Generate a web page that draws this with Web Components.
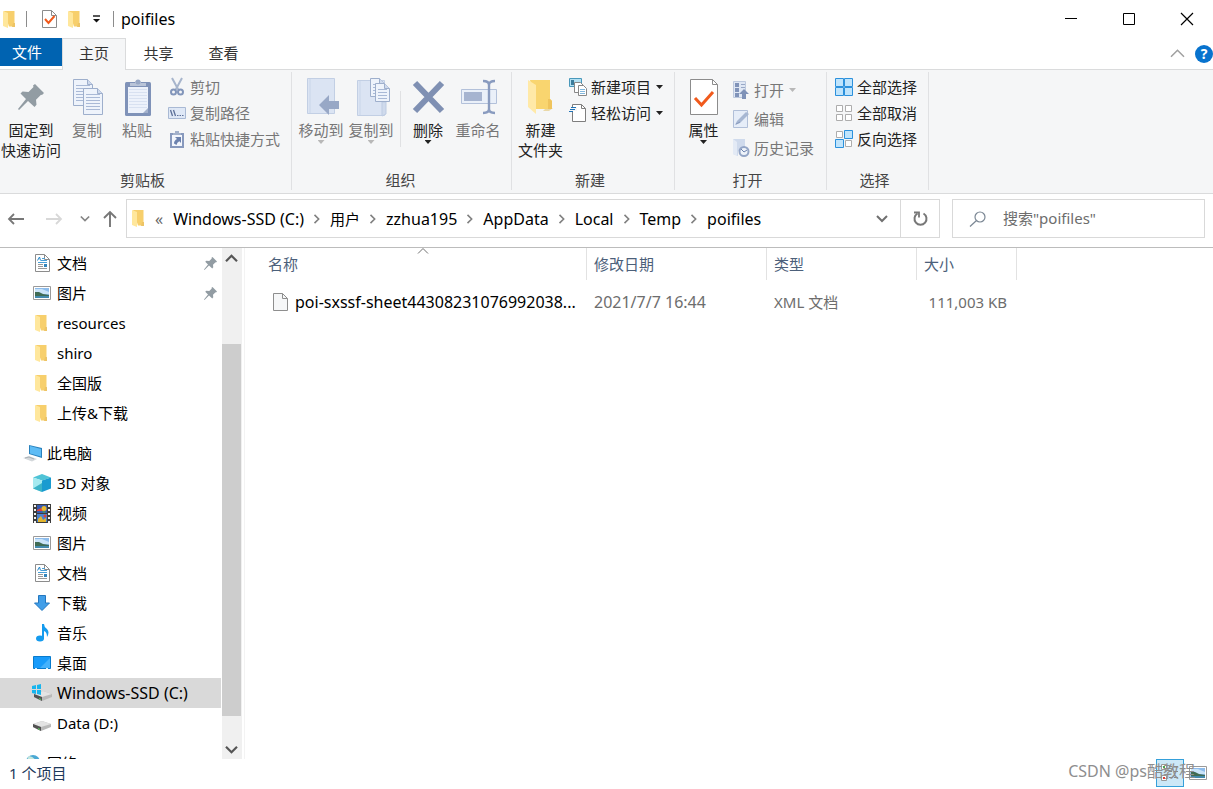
<!DOCTYPE html>
<html lang="zh-CN">
<head>
<meta charset="utf-8">
<title>poifiles</title>
<style>
html, body { margin: 0; height: 100%; }
body { font: 15px/20px "Noto Sans", "Noto Sans CJK SC", sans-serif; color: #000; background: #fff; overflow: hidden; }
</style>
</head>
<body>
<explorer-window></explorer-window>
<script>
const folder = `<svg width="12" height="17" viewBox="0 0 12 17"><path d="M1 0h10.500v15.500H6z" fill="#f7cf6c"/><path d="M10 12h2v4h-3z" fill="#edc466"/><path d="M0 0l5 2v15l-5-2z" fill="#ffe79c"/></svg>`;
const page = (w, h, inner, stroke = '#8c8c8c', fill = '#fff') => `<svg width="${w}" height="${h}" viewBox="0 0 ${w} ${h}"><path d="M.5.5h${w - 6}l5 5v${h - 6}H.5z" fill="${fill}" stroke="${stroke}"/><path d="M${w - 5.5}.5v5h5" fill="none" stroke="${stroke}"/>${inner}</svg>`;
const picture = `<svg width="18" height="14" viewBox="0 0 18 14"><path d="M.5.5h17v13H.5z" fill="#fff" stroke="#9a9a9a"/><path d="M2 2h14v10H2z" fill="#8dbcec"/><path d="M2 3h7l7 3v2H2z" fill="#c9e3f8"/><path d="M2 6l4 0 4 2 6 1v1H2z" fill="#3f6b54"/><path d="M2 10h14v2H2z" fill="#4289ad"/></svg>`;
const pinPath = `<path d="M17 0l9 9-2 2-1-.3-5 5 .5 5-2 2.300-6.500-6L1 26l-1-1 8-10-5.500-5.500 2-2 6 .5 5-5L15 1.500z" fill="#929ca3"/>`;
const drive = `<path d="M0 8l9-3 9 3v3l-10 4-8-4z" fill="#b9b9b9"/><path d="M0 8l9-3 9 3-10 3z" fill="#e4e4e4"/><path d="M0 8l8 3v4l-8-4z" fill="#525252"/><path d="M5 12l2 1v1l-2-1z" fill="#59d65a"/>`;
const chev = (w, d, c, sw = 2) => `<svg width="${w}" height="${w}" viewBox="0 0 12 12"><path d="${d}" fill="none" stroke="${c}" stroke-width="${sw}"/></svg>`;
const squares = s => `<svg width="18" height="18" viewBox="0 0 18 18">${[[0,0],[9,0],[0,9],[9,9]].map(([x, y], i) => s[i] === '1'
  ? `<path d="M${x + .5} ${y + .5}h8v8h-8z" fill="#bfe4fc" stroke="#2c91dc"/>`
  : `<path d="M${x + 1.5} ${y + 1.5}h6v6h-6z" fill="#fff" stroke="#adadad"/>`).join('')}</svg>`;
const lines = (x, y, w, n, gap, c) => Array.from({length: n}, (_, i) => `<path d="M${x} ${y + i * gap + .5}h${w}" stroke="${c}"/>`).join('');
const sheet = (x, y, w, h, n) => `<g transform="translate(${x} ${y})"><path d="M.5.5h${w - 6}l5 5v${h - 6}H.5z" fill="#eef3fb" stroke="#9eafcc"/><path d="M${w - 5.5}.5v5h5" fill="#cfdaed" stroke="#9eafcc"/>${lines(3, 6, w - 6, n, 3, '#a9b9d6')}</g>`;
const book = `<path d="M.5.5h27v35H.5z" fill="#dbe4f3" stroke="#c2cfe4"/><path d="M3 1v34" stroke="#c9d6ea"/>`;

const ICONS = {
  folder,
  folderBig: `<svg width="25" height="36" viewBox="0 0 25 36"><path d="M18 29h7l-4 3h-6z" fill="#ead9a8"/><path d="M2 1h20v19l2 2v8H8z" fill="#f9d56f"/><path d="M20 20l2 0 2 2v8h-4z" fill="#efc45d"/><path d="M0 1l8 5v29l-8-7z" fill="#ffe9a7"/></svg>`,
  check: page(15, 18, `<path d="M3 9l3.500 4 6-7" fill="none" stroke="#f15a1c" stroke-width="2"/>`),
  checkBig: page(28, 36, `<path d="M5 19l6.500 7L23 13" fill="none" stroke="#f15a1c" stroke-width="3"/>`),
  qat: `<svg width="7" height="8" viewBox="0 0 7 8"><path d="M0 1h7" stroke="#111" stroke-width="1.400"/><path d="M0 4h7L3.500 7.500z" fill="#111"/></svg>`,
  min: `<svg width="12" height="12" viewBox="0 0 12 12"><path d="M0 5.500h12" stroke="#000"/></svg>`,
  max: `<svg width="12" height="12" viewBox="0 0 12 12"><path d="M.5.5h11v11H.5z" fill="none" stroke="#000"/></svg>`,
  close: `<svg width="12" height="12" viewBox="0 0 12 12"><path d="M0 0l12 12M12 0L0 12" stroke="#000" stroke-width="1.200"/></svg>`,
  collapse: chev(13, 'M0 9l6-6 6 6', '#a0a0a0', 1.4),
  sort: chev(10, 'M0 9l6-6 6 6', '#707070', 1.2),
  crumb: chev(10, 'M3 1l5 5-5 5', '#808080', 1.9),
  down: chev(12, 'M1 3l5 5 5-5', '#707070'),
  history: chev(10, 'M1 3l5 5 5-5', '#858585'),
  scrollUp: chev(11, 'M0 9l6-6 6 6', '#555', 2.4),
  scrollDown: chev(11, 'M0 3l6 6 6-6', '#555', 2.4),
  back: `<svg width="16" height="12" viewBox="0 0 16 12"><path d="M6 1L1 6l5 5M1 6h15" fill="none" stroke="#777" stroke-width="1.800"/></svg>`,
  forward: `<svg width="16" height="12" viewBox="0 0 16 12"><path d="M10 1l5 5-5 5M15 6H0" fill="none" stroke="#d8d8d8" stroke-width="1.800"/></svg>`,
  up: `<svg width="14" height="16" viewBox="0 0 14 16"><path d="M1 7l6-6 6 6M7 1v15" fill="none" stroke="#777" stroke-width="1.900"/></svg>`,
  refresh: `<svg width="15" height="15" viewBox="0 0 15 15"><path d="M10.500 2.500A6 6 0 1 1 4.500 2.500" fill="none" stroke="#777" stroke-width="2"/><path d="M1 1.500h5v5" fill="none" stroke="#777" stroke-width="1.800"/></svg>`,
  search: `<svg width="16" height="16" viewBox="0 0 16 16"><circle cx="10" cy="6" r="5" fill="none" stroke="#7b8794" stroke-width="1.200"/><path d="M6.500 9.500L0 15.500" stroke="#7b8794" stroke-width="1.200"/></svg>`,
  pinBig: `<svg width="26" height="26" viewBox="0 0 26 26">${pinPath}</svg>`,
  pin: `<svg width="13" height="13" viewBox="0 0 26 26">${pinPath}</svg>`,
  copy: `<svg width="33" height="37" viewBox="-2 0 33 37">${sheet(0, 0, 20, 27, 6)}${sheet(10, 9, 20, 27, 6)}</svg>`,
  paste: `<svg width="28" height="37" viewBox="-2 0 28 37"><rect y="3" width="26" height="34" rx="1.500" fill="#7f92b8"/><path d="M3 8h20v26H3z" fill="#edf2fb"/>${lines(4, 10, 18, 7, 3, '#d8e1f1')}<path d="M5 4h5a3 3 0 0 1 6 0h5v3H5z" fill="#b9c4d8"/><circle cx="13" cy="3" r="2.500" fill="#98a8c5"/><path d="M18 34l5-5v5z" fill="#a3b1cc"/></svg>`,
  cut: `<svg width="14" height="18" viewBox="0 0 14 18"><path d="M2 0l6.500 12M12 0L5.500 12" stroke="#a7b5cc" stroke-width="2"/><circle cx="3.500" cy="14" r="2.500" fill="none" stroke="#8295ba" stroke-width="2"/><circle cx="10.500" cy="14" r="2.500" fill="none" stroke="#8295ba" stroke-width="2"/></svg>`,
  path: `<svg width="18" height="12" viewBox="0 0 18 12"><path d="M.5.500h17v11H.5z" fill="#dfe8f6" stroke="#a9b9d4"/><path d="M2.500 3l2 6M5.500 3l2 6" stroke="#5d7099" stroke-width="1.300"/><path d="M9 8.500h1.500m1 0H13m1 0h1.500" stroke="#5d7099"/></svg>`,
  shortcut: `<svg width="14" height="18" viewBox="0 0 14 18"><path d="M0 3h14v15H0z" fill="#8799bd"/><path d="M2 5h10v11H2z" fill="#f3f6fc"/><path d="M3 3h8v2H3zM5 1h4v3H5z" fill="#a3b1cb"/><path d="M5 7h6v6L9.300 11.300Q7 12.500 6.500 15L4 13.500q0-3 3-4.500z" fill="#6c82ae"/></svg>`,
  moveTo: `<svg width="37" height="38" viewBox="-4 0 37 38">${book}<path d="M12 27L22 17v6h10v8H22v6z" fill="#98a8c6"/></svg>`,
  copyTo: `<svg width="37" height="38" viewBox="-4 0 37 38"><g transform="translate(0 2)">${book}</g><path d="M25 38V24h4v12z" fill="#cfdaec" stroke="#bdcbe2"/>${sheet(13, 0, 15, 19, 4)}${sheet(18, 5, 15, 19, 4)}</svg>`,
  del: `<svg width="34" height="32" viewBox="-2 0 34 32"><path d="M2 2l27 28M29 2L2 30" stroke="#7f90b3" stroke-width="6"/></svg>`,
  rename: `<svg width="38" height="34" viewBox="-2 0 38 34"><path d="M.500 9.500h35v14H.5z" fill="#eaf0f9" stroke="#b3c1da"/><path d="M3 12h18v9H3z" fill="#a6b4d0"/><path d="M28 3v28M22 1q6 0 6 4 0-4 6-4M22 33q6 0 6-4 0 4 6 4" fill="none" stroke="#899bbf" stroke-width="2.400"/></svg>`,
  newItem: `<svg width="18" height="18" viewBox="0 0 18 18"><path d="M.5.5h12v8H.5z" fill="#b4e1f3" stroke="#4998bb"/><path d="M2 2h3v5H2z" fill="#3c7d9c"/><path d="M5.500 4.500h6l3 3v7h-9z" fill="#fff" stroke="#888"/><path d="M9.500 7.500h5l3 3v7h-8z" fill="#fff" stroke="#888"/><path d="M11 11.500h5m-5 2h5m-5 2h5" stroke="#82b7dd"/></svg>`,
  access: `<svg width="18" height="18" viewBox="0 0 18 18"><path d="M3.500.5h9l4 4v13h-13z" fill="#fff" stroke="#7e7e7e"/><path d="M12.500.5v4h4" fill="none" stroke="#7e7e7e"/><path d="M0 3h8v4H0z" fill="#f5f6f7"/><path d="M2 3.500h5M1 5.500h5M0 7.500h4" stroke="#2073b7" stroke-width="1.200"/></svg>`,
  open: `<svg width="16" height="18" viewBox="0 0 16 18"><path d="M.5.5h12v16H.5z" fill="#dfe7f4" stroke="#bdc9de"/><path d="M2 2h4v4H2zm0 5h4v4H2zm0 5h4v4H2z" fill="#8093b9"/><path d="M8 3.500h4m-4 3h4" stroke="#98a8c6"/><path d="M11 8l5 5h-3v5H9v-5H6z" fill="#7f92b8"/></svg>`,
  edit: `<svg width="16" height="18" viewBox="0 0 16 18"><path d="M.5.5h14v17H.5z" fill="#e6edf8" stroke="#b1bfd8"/><path d="M2 15l2-4L13 2l3 2-9 9z" fill="#a7b7d2"/><path d="M3 14l4-2" stroke="#8799bd"/></svg>`,
  records: `<svg width="17" height="18" viewBox="0 0 17 18"><path d="M0 0h12v12H5v5l-5-2z" fill="#cfdaec"/><path d="M0 0l4 3v14l-4-2z" fill="#e3eaf5"/><circle cx="11" cy="12.500" r="4.500" fill="#eef3fa" stroke="#93a5c6" stroke-width="2"/><path d="M8 10l3 3 3-2" fill="none" stroke="#6c82ae"/></svg>`,
  all: squares('1111'), none: squares('0000'), invert: squares('0110'),
  doc: page(15, 18, `<path d="M2.500 6.500l2-3.500 1 3.500" stroke="#2386c9" fill="none"/><path d="M7 4.500h3" stroke="#4a9fd6"/>${lines(6, 6, 6, 1, 2, '#4a9fd6')}${lines(3, 8, 9, 1, 2, '#4a9fd6')}${lines(3, 10, 5, 2, 2, '#999')}<path d="M9 10h3v3H9z" fill="#3486bd"/>${lines(3, 14, 9, 1, 2, '#999')}`),
  file: page(15, 18, '', '#8e8e8e', '#f6f7f8'),
  picture,
  pc: `<svg width="20" height="18" viewBox="0 0 20 18"><path d="M6 1l13 3v10L6 10z" fill="#2a82bd"/><path d="M7 2l11 3v7.500L7 9.500z" fill="#5ebcf5"/><path d="M0 14l6-2 8 3-5 2.500z" fill="#d4d8db"/><path d="M2 14l4-1 5 2" stroke="#aab1b6" fill="none"/></svg>`,
  cube: `<svg width="18" height="18" viewBox="0 0 18 18"><path d="M9 0l9 3.500-9 3-9-3z" fill="#4fc3d6"/><path d="M0 3.500l9 3V18l-9-3.500z" fill="#a5eaf0"/><path d="M0 14.500L9 9v9z" fill="#3bb3c8"/><path d="M18 3.500l-9 3V18l9-3.500z" fill="#1a9bd0"/></svg>`,
  video: `<svg width="18" height="19" viewBox="0 0 18 19"><path d="M0 0h18v19H0z" fill="#3c3c3c"/><path d="M4 1h10v8H4z" fill="#365bb0"/><path d="M4 10h10v8H4z" fill="#4a82cf"/><path d="M4 6l4-2 2 3H4z" fill="#df4139"/><circle cx="11" cy="4.500" r="2.500" fill="#e9b92f"/><path d="M9 7l4 1-2 1z" fill="#50a64a"/><path d="M5 15l3-3 2 4 3-2v4H5z" fill="#e3b52d"/><circle cx="12" cy="12" r="1.500" fill="#df4139"/><path d="M2 1v18M16 1v18" stroke="#f2f2f2" stroke-width="2" stroke-dasharray="2 2"/></svg>`,
  download: `<svg width="16" height="16" viewBox="0 0 16 16"><path d="M4.500.5h7V8h4L8 15.500.5 8h4z" fill="#419ee8" stroke="#2377bf"/></svg>`,
  music: `<svg width="13" height="18" viewBox="0 0 13 18"><ellipse cx="4" cy="14.500" rx="4" ry="3" fill="#149bee"/><path d="M6 0h2q0 3 3 5 3 3 0 8 0-5-3-6v8H6z" fill="#149bee"/></svg>`,
  desktop: `<svg width="18" height="14" viewBox="0 0 18 14"><path d="M.5.5h17v12H.5z" fill="#189bfa" stroke="#087bcd"/><path d="M7 12L17 2v10z" fill="#45b2fc"/><path d="M2 12.500h13" stroke="#d9f0ff" stroke-dasharray="2 9"/></svg>`,
  driveC: `<svg width="20" height="18" viewBox="0 0 20 18"><g transform="translate(2 2)">${drive}</g><path d="M0 2l4-1v4H0zM5 1l4-1v5H5zM0 6h4v4L0 9zM5 6h4v5l-4-1z" fill="#16b5ee"/></svg>`,
  driveD: `<svg width="18" height="18" viewBox="0 0 18 18"><g transform="translate(0 2)">${drive}</g></svg>`,
  network: `<svg width="18" height="18" viewBox="0 0 18 18"><circle cx="9" cy="8" r="7" fill="#4aa8d4"/><path d="M5 2q5 1 7 5-4 1-8 5-2-6 1-10z" fill="#c4e7dd"/><path d="M8 10h10v6H8z" fill="#63b9ee"/></svg>`,
  details: `<svg width="18" height="18" viewBox="0 0 18 18"><path d="M.5.5h5v5h-5zM.5 11.500h5v5h-5z" fill="#fff" stroke="#999"/><path d="M2 2h2v2H2z" fill="#4aa352"/><path d="M2 13h2v2H2z" fill="#e13b2b"/><path d="M8 2.500h3m2 0h4M8 7.500h3m2 0h4M8 13.500h3m2 0h4" stroke="#888"/></svg>`,
};

const define = (name, css, html, setup) => {
  const template = document.createElement('template');
  template.innerHTML = `<style>*{box-sizing:border-box}button,input{font:inherit;color:inherit;border:0;background:none;padding:0;margin:0}a{color:inherit;text-decoration:none}${css}</style>${html}`;
  customElements.define(name, class extends HTMLElement {
    connectedCallback() {
      if (this.shadowRoot) return;
      this.attachShadow({ mode: 'open' }).append(template.content.cloneNode(true));
      setup?.(this, this.shadowRoot);
    }
  });
};

define('ui-icon', ':host{display:inline-flex;align-items:center;justify-content:center;flex:none}svg{display:block;overflow:visible}', '<span></span>',
  (el, root) => { root.querySelector('span').innerHTML = ICONS[el.getAttribute('name')]; });

define('title-bar', `
:host{display:flex;align-items:center;height:38px;padding-left:3px;font-size:16px}
.quick{display:flex;align-items:center}
.bar{width:1px;height:16px;background:#8c8c8c}
button{display:flex;align-items:center;justify-content:center;height:38px}
.first{margin-right:11px}.check{margin-left:14px;width:16px}.new{margin-left:11px;width:12px}.more{width:33px}
h1{font:inherit;margin:0 0 0 7px;flex:1}
.controls{display:flex;margin-right:-3px}.controls button{width:58px}`, `
<div class="quick"><ui-icon class="first" name="folder"></ui-icon><span class="bar"></span>
<button class="check" aria-label="属性"><ui-icon name="check"></ui-icon></button>
<button class="new" aria-label="新建文件夹"><ui-icon name="folder"></ui-icon></button>
<button class="more" aria-label="自定义快速访问工具栏"><ui-icon name="qat"></ui-icon></button><span class="bar"></span></div>
<h1><slot></slot></h1>
<div class="controls"><button aria-label="最小化"><ui-icon name="min"></ui-icon></button><button aria-label="最大化"><ui-icon name="max"></ui-icon></button><button aria-label="关闭"><ui-icon name="close"></ui-icon></button></div>`);

define('ribbon-tabs', `
:host{display:flex;height:32px;border-bottom:1px solid #dadbdc;color:#333}
button{width:65px;height:31px;padding-bottom:2px}
.file{width:62px;height:28px;background:#0063b1;color:#fff;padding:0 8px 0 0}
.active{width:64px;height:32px;background:#f5f6f7;border:1px solid #dadbdc;border-bottom:0;padding-bottom:3px}
.end{margin-left:auto;display:flex;align-items:center;gap:11px}
.end button{width:auto;display:flex;align-items:center;padding:0}
.end .help{width:18px;height:18px;border-radius:9px;background:#0873ce;color:#fff;font:bold 14px/18px "Noto Sans",sans-serif;justify-content:center}`, `
<button class="file">文件</button><button class="active">主页</button><button>共享</button><button>查看</button>
<div class="end"><button aria-label="最小化功能区"><ui-icon name="collapse"></ui-icon></button><button class="help">?</button></div>`);

define('ribbon-group', `
:host{display:flex;flex-direction:column;position:relative;padding:4px 5px 3px 0;height:123px}
:host::after{content:"";position:absolute;right:0;top:2px;bottom:3px;width:1px;background:#e0e1e3}
.tools{display:flex;flex:1;align-items:flex-start}
.label{text-align:center;color:#444;padding-right:2px}`, `
<div class="tools"><slot></slot></div><div class="label"></div>`,
  (el, root) => { root.querySelector('.label').textContent = el.getAttribute('label'); });

define('ribbon-button', `
:host{display:block;width:50px;color:#222}
:host([disabled]){color:#777}
button{display:block;width:100%;text-align:center;white-space:nowrap}
.icon{display:flex;height:46px;align-items:center;justify-content:center}
.arrow{display:none;width:7px;height:4px;margin:0 auto;background:currentColor;clip-path:polygon(0 0,100% 0,50% 100%)}
:host([menu]) .arrow{display:block}
:host([menu][disabled]) .arrow{background:#b8b8b8}`, `
<button><span class="icon"><ui-icon></ui-icon></span><slot></slot><span class="arrow"></span></button>`,
  (el, root) => {
    const icon = document.createElement('ui-icon');
    icon.setAttribute('name', el.getAttribute('icon'));
    root.querySelector('ui-icon').replaceWith(icon);
    root.querySelector('button').disabled = el.hasAttribute('disabled');
  });

define('ribbon-item', `
:host{display:block;color:#222}
:host([disabled]){color:#777}
button{display:flex;align-items:center;height:26px;white-space:nowrap}
.icon{display:flex;justify-content:center;width:18px;margin-right:4px}
.arrow{display:none;width:7px;height:4px;margin-left:5px;background:currentColor;clip-path:polygon(0 0,100% 0,50% 100%)}
:host([menu]) .arrow{display:block}
:host([menu][disabled]) .arrow{background:#b8b8b8}`, `
<button><span class="icon"></span><slot></slot><span class="arrow"></span></button>`,
  (el, root) => {
    const icon = document.createElement('ui-icon');
    icon.setAttribute('name', el.getAttribute('icon'));
    root.querySelector('.icon').append(icon);
    root.querySelector('button').disabled = el.hasAttribute('disabled');
  });

define('explorer-ribbon', `
:host{display:flex;background:#f5f6f7;border-bottom:1px solid #dadbdc}
.list{display:grid}
.spaced{gap:3px;padding-top:3px}
.pin{width:62px}.clip{width:292px}.org{width:220px;padding-left:4px}.make{width:163px}.openers{width:152px}.pick{width:102px}
.rule{width:1px;height:56px;margin:17px 2px 0 4px;background:#e0e1e3}
.after{margin-left:6px}
.indent{margin-left:8px}
.folder,.props{width:57px}`, `
<ribbon-group class="clip" label="剪贴板">
 <ribbon-button class="pin" icon="pinBig">固定到<br>快速访问</ribbon-button>
 <ribbon-button icon="copy" disabled>复制</ribbon-button>
 <ribbon-button icon="paste" disabled>粘贴</ribbon-button>
 <div class="list after"><ribbon-item icon="cut" disabled>剪切</ribbon-item><ribbon-item icon="path" disabled>复制路径</ribbon-item><ribbon-item icon="shortcut" disabled>粘贴快捷方式</ribbon-item></div>
</ribbon-group>
<ribbon-group class="org" label="组织">
 <ribbon-button icon="moveTo" disabled menu>移动到</ribbon-button>
 <ribbon-button icon="copyTo" disabled menu>复制到</ribbon-button>
 <span class="rule"></span>
 <ribbon-button icon="del" menu>删除</ribbon-button>
 <ribbon-button icon="rename" disabled>重命名</ribbon-button>
</ribbon-group>
<ribbon-group class="make" label="新建">
 <ribbon-button class="folder" icon="folderBig">新建<br>文件夹</ribbon-button>
 <div class="list"><ribbon-item icon="newItem" menu>新建项目</ribbon-item><ribbon-item icon="access" menu>轻松访问</ribbon-item></div>
</ribbon-group>
<ribbon-group class="openers" label="打开">
 <ribbon-button class="props" icon="checkBig" menu>属性</ribbon-button>
 <div class="list spaced"><ribbon-item icon="open" menu disabled>打开</ribbon-item><ribbon-item icon="edit" disabled>编辑</ribbon-item><ribbon-item icon="records" disabled>历史记录</ribbon-item></div>
</ribbon-group>
<ribbon-group class="pick" label="选择">
 <div class="list indent"><ribbon-item icon="all">全部选择</ribbon-item><ribbon-item icon="none">全部取消</ribbon-item><ribbon-item icon="invert">反向选择</ribbon-item></div>
</ribbon-group>`);

define('address-bar', `
:host{display:flex;height:54px;padding:5px 8px 9px 0;border-bottom:1px solid #bcbcbc}
.go{display:grid;grid-template-columns:32px 44px 17px 33px}
.go button,.drop,.refresh{display:flex;align-items:center;justify-content:center}
.box{display:flex;flex:1;min-width:0;border:1px solid #d9d9d9;padding-left:5px;align-items:center;font-size:16px}
nav{display:flex;align-items:center;flex:1;min-width:0;white-space:nowrap}
nav ui-icon{width:26px}
nav .cjk{font-size:15px}
.dots{margin:0 10px 0 11px;color:#666}
.drop{width:36px;height:37px}.refresh{width:39px;height:37px;border-left:1px solid #d9d9d9}
.search{display:flex;align-items:center;width:253px;margin-left:12px;border:1px solid #d9d9d9;padding-left:17px}
input{flex:1;min-width:0;margin-left:17px;outline:0;padding-bottom:1px}
input::placeholder{color:#6d6d6d;opacity:1}`, `
<div class="go"><button aria-label="后退"><ui-icon name="back"></ui-icon></button><button aria-label="前进" disabled><ui-icon name="forward"></ui-icon></button><button aria-label="最近位置"><ui-icon name="history"></ui-icon></button><button aria-label="向上"><ui-icon name="up"></ui-icon></button></div>
<div class="box"><ui-icon name="folder"></ui-icon><nav><span class="dots">«</span><a href="#c">Windows-SSD (C:)</a><ui-icon name="crumb"></ui-icon><a class="cjk" href="#users">用户</a><ui-icon name="crumb"></ui-icon><a href="#zzhua195">zzhua195</a><ui-icon name="crumb"></ui-icon><a href="#appdata">AppData</a><ui-icon name="crumb"></ui-icon><a href="#local">Local</a><ui-icon name="crumb"></ui-icon><a href="#temp">Temp</a><ui-icon name="crumb"></ui-icon><a href="#poifiles">poifiles</a></nav>
<button class="drop" aria-label="历史地址"><ui-icon name="down"></ui-icon></button><button class="refresh" aria-label="刷新"><ui-icon name="refresh"></ui-icon></button></div>
<label class="search"><ui-icon name="search"></ui-icon><input type="search" aria-label="搜索" placeholder='搜索"poifiles"'></label>`);

define('nav-item', `
:host{display:block}
a{display:flex;align-items:center;height:30px;padding:0 4px 0 32px;white-space:nowrap}
:host([root]){margin-top:10px}
:host([root]) a{padding-left:23px}
:host([selected]) a{background:#d9d9d9}
:host([latin]) .text{font-size:16px}
.icon{display:flex;justify-content:center;width:20px;margin-right:5px}
:host([icon="folder"]) .icon{padding-right:2px}
:host([root]) .icon{margin-right:4px}
.text{flex:1}
.pin{display:none}:host([pinned]) .pin{display:inline-flex}`, `
<a href="#"><span class="icon"></span><span class="text"><slot></slot></span><ui-icon class="pin" name="pin"></ui-icon></a>`,
  (el, root) => {
    const icon = document.createElement('ui-icon');
    icon.setAttribute('name', el.getAttribute('icon'));
    root.querySelector('.icon').append(icon);
  });

define('scroll-track', `
:host{display:flex;flex-direction:column;width:20px;background:#f0f0f0}
button{height:20px;flex:none;display:flex;align-items:center;justify-content:center;padding-right:2px}
.before{flex:76}.thumb{flex:372;background:#cdcdcd;margin-right:1px}.after{flex:23}`, `
<button aria-label="向上滚动"><ui-icon name="scrollUp"></ui-icon></button><div class="before"></div><div class="thumb"></div><div class="after"></div><button aria-label="向下滚动"><ui-icon name="scrollDown"></ui-icon></button>`);

define('nav-pane', `
:host{display:flex;width:245px;flex:none;border-right:1px solid #f3f3f3;padding-right:2px;min-height:0}
nav{flex:1;min-width:0;overflow:hidden;padding-right:1px}`, `
<nav>
<nav-item icon="doc" pinned>文档</nav-item><nav-item icon="picture" pinned>图片</nav-item>
<nav-item icon="folder">resources</nav-item><nav-item icon="folder">shiro</nav-item><nav-item icon="folder">全国版</nav-item><nav-item icon="folder">上传&amp;下载</nav-item>
<nav-item icon="pc" root>此电脑</nav-item>
<nav-item icon="cube">3D 对象</nav-item><nav-item icon="video">视频</nav-item><nav-item icon="picture">图片</nav-item><nav-item icon="doc">文档</nav-item><nav-item icon="download">下载</nav-item><nav-item icon="music">音乐</nav-item><nav-item icon="desktop">桌面</nav-item>
<nav-item icon="driveC" selected latin>Windows-SSD (C:)</nav-item><nav-item icon="driveD">Data (D:)</nav-item>
<nav-item icon="network" root>网络</nav-item>
</nav><scroll-track></scroll-track>`);

define('file-list', `
:host{display:block;flex:1;min-width:0;padding-left:15px;overflow:hidden}
table{border-collapse:separate;border-spacing:0;table-layout:fixed;width:757px}
.name{width:327px}.date{width:180px}.type{width:150px}.size{width:100px}
th{position:relative;height:32px;padding:0 0 0 7px;border-right:1px solid #e2e2e2;text-align:left;font-weight:400;color:#4c607a}
th.name{padding-left:8px}
.sort{position:absolute;top:0;left:0;right:0;display:flex;justify-content:center;height:6px}
td{height:44px;padding:0 0 0 7px;color:#6d6d6d;white-space:nowrap}
td.name{color:#000;font-size:16px;padding-left:13px}
td.date{font-size:16px}
td.size{text-align:right;padding-right:10px}
.file{display:flex;align-items:center;gap:7px}`, `
<table><thead><tr><th class="name">名称<span class="sort"><ui-icon name="sort"></ui-icon></span></th><th class="date">修改日期</th><th class="type">类型</th><th class="size">大小</th></tr></thead>
<tbody><tr><td class="name"><span class="file"><ui-icon name="file"></ui-icon>poi-sxssf-sheet44308231076992038...</span></td><td class="date">2021/7/7 16:44</td><td>XML 文档</td><td class="size">111,003 KB</td></tr></tbody></table>`);

define('status-bar', `
:host{display:flex;height:30px;position:relative;padding:0 6px 0 9px;color:#1e395b}
.count{line-height:29px;flex:1}
button{display:flex;align-items:center;justify-content:center;width:28px;height:28px}
.on{background:#cce8f7;border:1px solid #35a0da;margin-right:5px}
.picture{width:18px}
.mark{position:absolute;right:18px;top:2px;color:#8e8e8e;font-size:16px}`, `
<span class="count"><slot></slot></span><button class="on" aria-label="详细信息"><ui-icon name="details"></ui-icon></button><button class="picture" aria-label="大缩略图"><ui-icon name="picture"></ui-icon></button><span class="mark">CSDN @ps酷教程</span>`);

define('explorer-window', `
:host{display:flex;flex-direction:column;height:100vh;overflow:hidden}
main{display:flex;flex:1;min-height:0}
title-bar,ribbon-tabs,explorer-ribbon,address-bar,status-bar{flex:none}`, `
<title-bar>poifiles</title-bar><ribbon-tabs></ribbon-tabs><explorer-ribbon></explorer-ribbon><address-bar></address-bar>
<main><nav-pane></nav-pane><file-list></file-list></main><status-bar>1 个项目</status-bar>`);
</script>
</body>
</html>
